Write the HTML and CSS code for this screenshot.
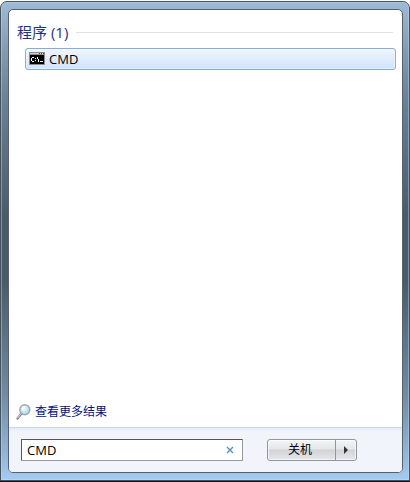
FILE: index.html
```html
<!DOCTYPE html>
<html lang="zh-CN">
<head>
  <meta charset="UTF-8">
  <meta name="viewport" content="width=device-width, initial-scale=1.0">
  <title>CMD</title>
  <link rel="stylesheet" href="styles.css">
</head>
<body>
  <div class="start-menu">
    <div class="panel">
      <main class="results">
        <h1 class="group-title">程序 (1)</h1>
        <a class="result" href="#">
          <svg class="result-icon" width="16" height="13" viewBox="0 0 16 13" shape-rendering="crispEdges" aria-hidden="true">
            <path fill="#8c8c8c" d="M0 0h16v13H0z"/>
            <path fill="#c9cbcd" d="M1 1h14v1H1z"/>
            <path fill="#4b4b4b" d="M10 1h1v1h-1zM12 1h1v1h-1zM14 1h1v1h-1z"/>
            <path fill="#000" d="M1 3h14v9H1z"/>
            <path fill="#fff" d="M3 5h2v1H3zM2 6h1v3H2zM3 9h2v1H3zM6 6h1v1H6zM6 8h1v1H6zM8 5h1v2H8zM9 7h1v3H9zM11 9h3v1h-3z"/>
          </svg>
          <span>CMD</span>
        </a>
        <a class="more" href="#">
          <svg class="more-icon" width="16" height="16" viewBox="0 0 16 16" aria-hidden="true">
            <defs>
              <radialGradient id="lens" cx="40%" cy="35%">
                <stop offset="0" stop-color="#fff"/>
                <stop offset="1" stop-color="#b5dcf5"/>
              </radialGradient>
            </defs>
            <path d="M5 10L1.500 14.500" stroke="#85898e" stroke-width="2.400" stroke-linecap="round"/>
            <path d="M5 9.800L1.500 14" stroke="#d0d3d6" stroke-linecap="round"/>
            <circle cx="8.800" cy="5.800" r="5" fill="url(#lens)" stroke="#a2a8af" stroke-width="1.400"/>
            <path d="M6 6a3 3 0 0 1 3-3" fill="none" stroke="#fff"/>
          </svg>
          <span>查看更多结果</span>
        </a>
      </main>
      <footer class="footer">
        <form class="search">
          <input class="search-input" type="text" value="CMD" aria-label="搜索程序和文件">
          <button class="clear" type="reset" aria-label="清除">
            <svg width="8" height="8" viewBox="0 0 8 8" aria-hidden="true">
              <path d="M1 1l6 6M7 1L1 7" stroke="#4f90c4" stroke-width="1.400"/>
            </svg>
          </button>
        </form>
        <div class="power">
          <button class="power-btn" type="button">关机</button>
          <button class="power-menu" type="button" aria-label="关机选项">
            <svg width="4" height="8" viewBox="0 0 4 8" aria-hidden="true">
              <path d="M0 0l4 4-4 4z" fill="#333"/>
            </svg>
          </button>
        </div>
      </footer>
    </div>
  </div>
</body>
</html>
```

FILE: styles.css
```css
* {
  box-sizing: border-box;
  margin: 0;
  padding: 0;
}

body {
  min-height: 100vh;
  display: flex;
  padding: 1px 0;
  background: linear-gradient(#fff 50%, #10161c 50%);
  font-family: "Open Sans", "Noto Sans CJK SC", sans-serif;
  font-size: 12px;
  color: #000;
}

.start-menu {
  flex: 1;
  display: flex;
  padding: 7px 6px 7px 7px;
  border: 1px solid #46525d;
  border-radius: 7px 7px 0 0;
  background: linear-gradient(#9dbbd6, #839cb3 10%, #6b8298 20%, #4b5a67 45%, #4b5a67 58%, #718ba4 82%, #8fb3d7 94%, #a5cbf0);
  box-shadow: inset 0 0 0 1px rgba(200, 225, 245, 0.4);
}

.panel {
  flex: 1;
  display: flex;
  flex-direction: column;
  border: 1px solid #56616c;
  border-radius: 5px;
  background: #fff;
  overflow: hidden;
}

.results {
  flex: 1;
  display: flex;
  flex-direction: column;
  padding: 12px 6px 5px 7px;
}

.group-title {
  display: flex;
  align-items: center;
  gap: 8px;
  margin: 0 3px 0 1px;
  font-size: 15px;
  font-weight: normal;
  line-height: 20px;
  color: #1e3287;
}

.group-title::after {
  content: "";
  flex: 1;
  height: 1px;
  background: #e2e2e2;
}

.result {
  display: flex;
  align-items: center;
  gap: 4px;
  height: 22px;
  margin: 6px 0 0 9px;
  padding: 0 3px 1px;
  border: 1px solid #84acdd;
  border-radius: 3px;
  background: linear-gradient(#f0f6fe, #cfe3fd);
  box-shadow: inset 0 0 0 1px rgba(255, 255, 255, 0.4);
  font-size: 13px;
  color: #000;
  text-decoration: none;
}

.more {
  display: flex;
  align-items: center;
  gap: 3px;
  margin-top: auto;
  line-height: 20px;
  color: #00137f;
  text-decoration: none;
}

.footer {
  display: flex;
  gap: 24px;
  padding: 11px 12px;
  border-top: 1px solid #cbd8e8;
  background: linear-gradient(#e4ebf5, #f1f4fb 4px);
}

.search {
  flex: 1;
  max-width: 222px;
  height: 22px;
  display: flex;
  border: 1px solid #999;
  border-top-color: #555;
  border-left-color: #555;
  border-radius: 1px;
  background: #fff;
}

.search-input {
  flex: 1;
  min-width: 0;
  padding: 0 0 1px 5px;
  border: none;
  outline: none;
  background: none;
  font: inherit;
  font-size: 13px;
}

.clear {
  display: flex;
  align-items: center;
  justify-content: center;
  width: 24px;
  border: none;
  background: none;
}

.power {
  display: flex;
  height: 22px;
  border: 1px solid #929599;
  border-radius: 3px;
  background: linear-gradient(#f4f5f6, #e4e6e8 45%, #d0d3d7 50%, #e6e8eb);
  box-shadow: inset 0 0 0 1px rgba(255, 255, 255, 0.6);
}

.power-btn,
.power-menu {
  display: flex;
  align-items: center;
  justify-content: center;
  border: none;
  background: none;
  font: inherit;
  color: #000;
}

.power-btn {
  width: 67px;
  padding: 0 3px 2px 0;
}

.power-menu {
  width: 21px;
  border-left: 1px solid #929599;
}
```
